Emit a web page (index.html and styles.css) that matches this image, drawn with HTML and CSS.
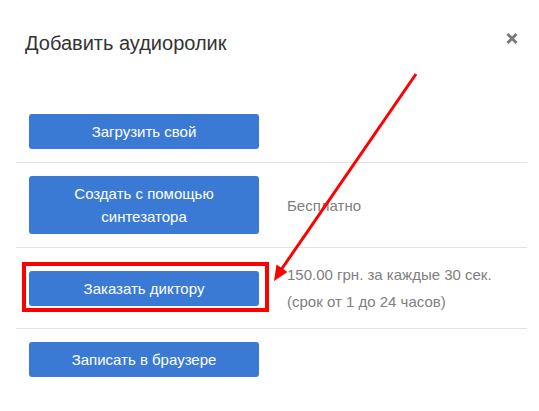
FILE: index.html
```html
<!DOCTYPE html>
<html lang="ru">
<head>
    <meta charset="UTF-8">
    <meta name="viewport" content="width=device-width, initial-scale=1.0">
    <title>Добавить аудиоролик</title>
    <link rel="stylesheet" href="styles.css">
</head>
<body>
    <div class="modal">
        <!-- заголовок -->
        <div class="modal-header">
            <h2 class="modal-title">Добавить аудиоролик</h2>
            <a href="javascript:;" class="close" title="Закрыть">
                <svg width="12" height="13" viewBox="0 0 12 13">
                    <path d="M1.5 2 L10.5 11 M10.5 2 L1.5 11" stroke="#7b7b7b" stroke-width="3" fill="none"/>
                </svg>
            </a>
        </div>
        <!-- варианты -->
        <ul class="options">
            <li class="option">
                <a href="javascript:;" class="btn">Загрузить свой</a>
            </li>
            <li class="option">
                <a href="javascript:;" class="btn">Создать с помощью синтезатора</a>
                <span class="note">Бесплатно</span>
            </li>
            <li class="option option-tall">
                <a href="javascript:;" class="btn">Заказать диктору</a>
                <span class="note">150.00 грн. за каждые 30 сек.<br>(срок от 1 до 24 часов)</span>
            </li>
            <li class="option">
                <a href="javascript:;" class="btn">Записать в браузере</a>
            </li>
        </ul>
    </div>
    <!-- пометка поверх скриншота -->
    <svg class="markup" width="539" height="411" viewBox="0 0 539 411">
        <rect x="24" y="264" width="243" height="46" fill="none" stroke="#ff0000" stroke-width="4"/>
        <line x1="416" y1="74" x2="281" y2="270" stroke="#ff0000" stroke-width="3"/>
        <polygon points="274,281 287.5,272 276.5,264.5" fill="#ff0000"/>
    </svg>
</body>
</html>
```

FILE: styles.css
```css
* {
    margin: 0;
    padding: 0;
}
body {
    background: #fff;
    font-family: "Liberation Sans", Arial, sans-serif;
    color: #333;
}
a {
    text-decoration: none;
}
li {
    list-style: none;
}
.modal {
    width: 539px;
    height: 411px;
    background: #fff;
}
.modal-header {
    display: flex;
    justify-content: space-between;
    align-items: flex-start;
    padding: 31px 21px 0 25px;
    height: 70px;
}
.modal-title {
    font-size: 20px;
    font-weight: normal;
    line-height: 24px;
    color: #333;
}
.close {
    display: block;
    margin-top: 1px;
    line-height: 0;
}
.options {
    padding: 0 12px 0 16px;
}
.option {
    display: flex;
    align-items: center;
    gap: 28px;
    padding: 13px 13px;
    border-bottom: 1px solid #e3e3e3;
}
.option:last-child {
    border-bottom: none;
}
.btn {
    display: block;
    flex: none;
    width: 230px;
    box-sizing: border-box;
    padding: 6px 30px;
    background: #3a7ad5;
    border-radius: 3px;
    color: #fff;
    font-size: 15px;
    line-height: 23px;
    text-align: center;
}
.note {
    font-size: 15px;
    line-height: 27px;
    color: #808080;
}
.markup {
    position: absolute;
    top: 0;
    left: 0;
    pointer-events: none;
}
```
